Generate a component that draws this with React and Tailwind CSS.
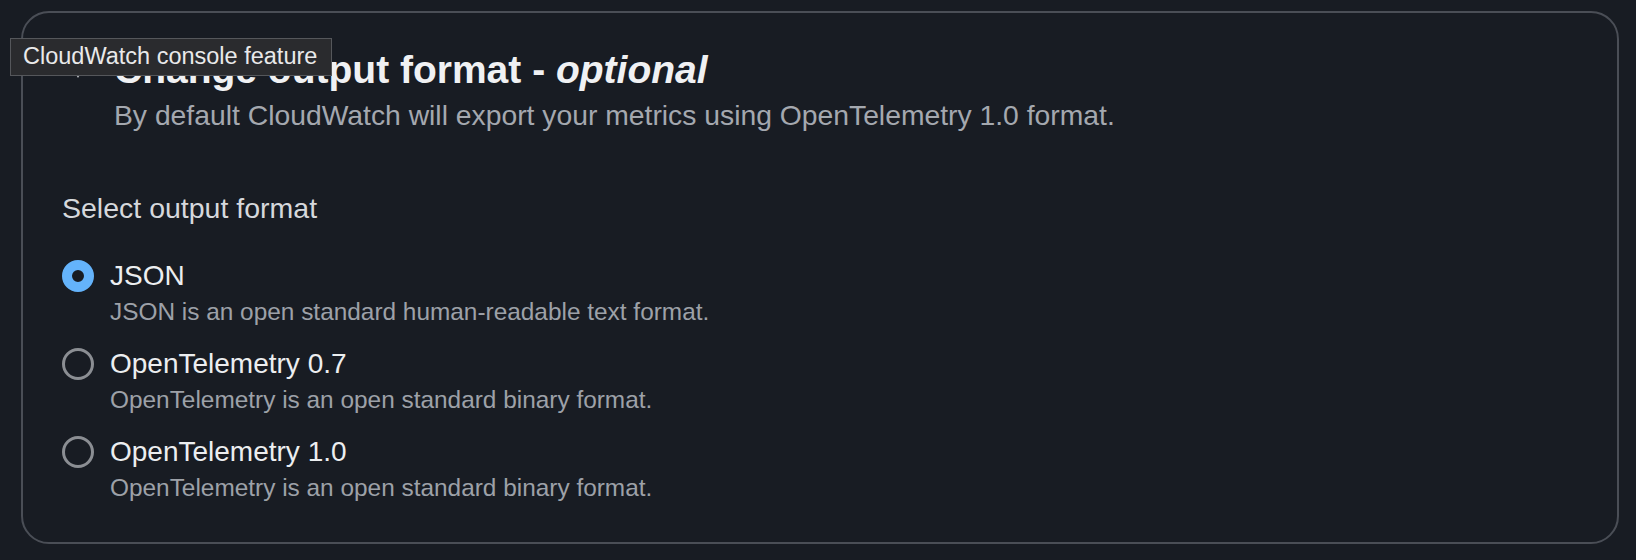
import React, { useState } from 'react';

const formats = [
  { id: 'json', label: 'JSON', desc: 'JSON is an open standard human-readable text format.' },
  { id: 'otel07', label: 'OpenTelemetry 0.7', desc: 'OpenTelemetry is an open standard binary format.' },
  { id: 'otel10', label: 'OpenTelemetry 1.0', desc: 'OpenTelemetry is an open standard binary format.' },
];

function Radio({ checked }) {
  return checked ? (
    <span className="w-[32px] h-[32px] shrink-0 rounded-full border-[10px] border-[#64b3fb] bg-[#181c23]" />
  ) : (
    <span className="w-[32px] h-[32px] shrink-0 rounded-full border-[3px] border-[#8b8e93]" />
  );
}

export default function App() {
  const [selected, setSelected] = useState('json');

  return (
    <div className="relative h-[560px] w-full bg-[#181c23] pt-[11px] pl-[21px] pr-[17px] font-['Liberation_Sans',Arial,sans-serif]">
      <div className="h-[533px] rounded-[28px] border-2 border-[#4a4e56] pl-[39px] pt-[34px]">
        {/* header */}
        <div className="flex gap-5">
          <div className="w-[32px] h-[46px] flex items-start justify-center pt-[17px]">
            <svg width="18" height="16" viewBox="0 0 18 16">
              <path d="M2 2 L16 2 L9 14 Z" fill="#c2c4c9" />
            </svg>
          </div>
          <div>
            <h2 className="text-[39px] leading-[46px] font-bold text-[#f0f1f3]">
              Change output format - <i>optional</i>
            </h2>
            <p className="mt-[4px] text-[28.3px] leading-[36px] text-[#a4a8af]">
              By default CloudWatch will export your metrics using OpenTelemetry 1.0 format.
            </p>
          </div>
        </div>

        <div className="mt-[57px] text-[28.5px] leading-[36px] text-[#d6d8dc]">Select output format</div>

        <div className="mt-[32px] flex flex-col gap-[18px]">
          {formats.map((f) => (
            <label key={f.id} className="flex flex-col cursor-pointer" onClick={() => setSelected(f.id)}>
              <div className="flex items-center gap-[16px]">
                <Radio checked={selected === f.id} />
                <span className="text-[28px] leading-[36px] text-[#eceef0]">{f.label}</span>
              </div>
              <span className="pl-[48px] mt-[2px] text-[24.4px] leading-[32px] text-[#9da1a8]">{f.desc}</span>
            </label>
          ))}
        </div>
      </div>

      {/* native-style tooltip */}
      <div className="absolute left-[10px] top-[38px] h-[38px] w-[322px] flex items-center pl-[12px] bg-[#2a2b2e] border border-[#55575b] text-[23.5px] text-[#e9e9ea]">
        CloudWatch console feature
      </div>
    </div>
  );
}
